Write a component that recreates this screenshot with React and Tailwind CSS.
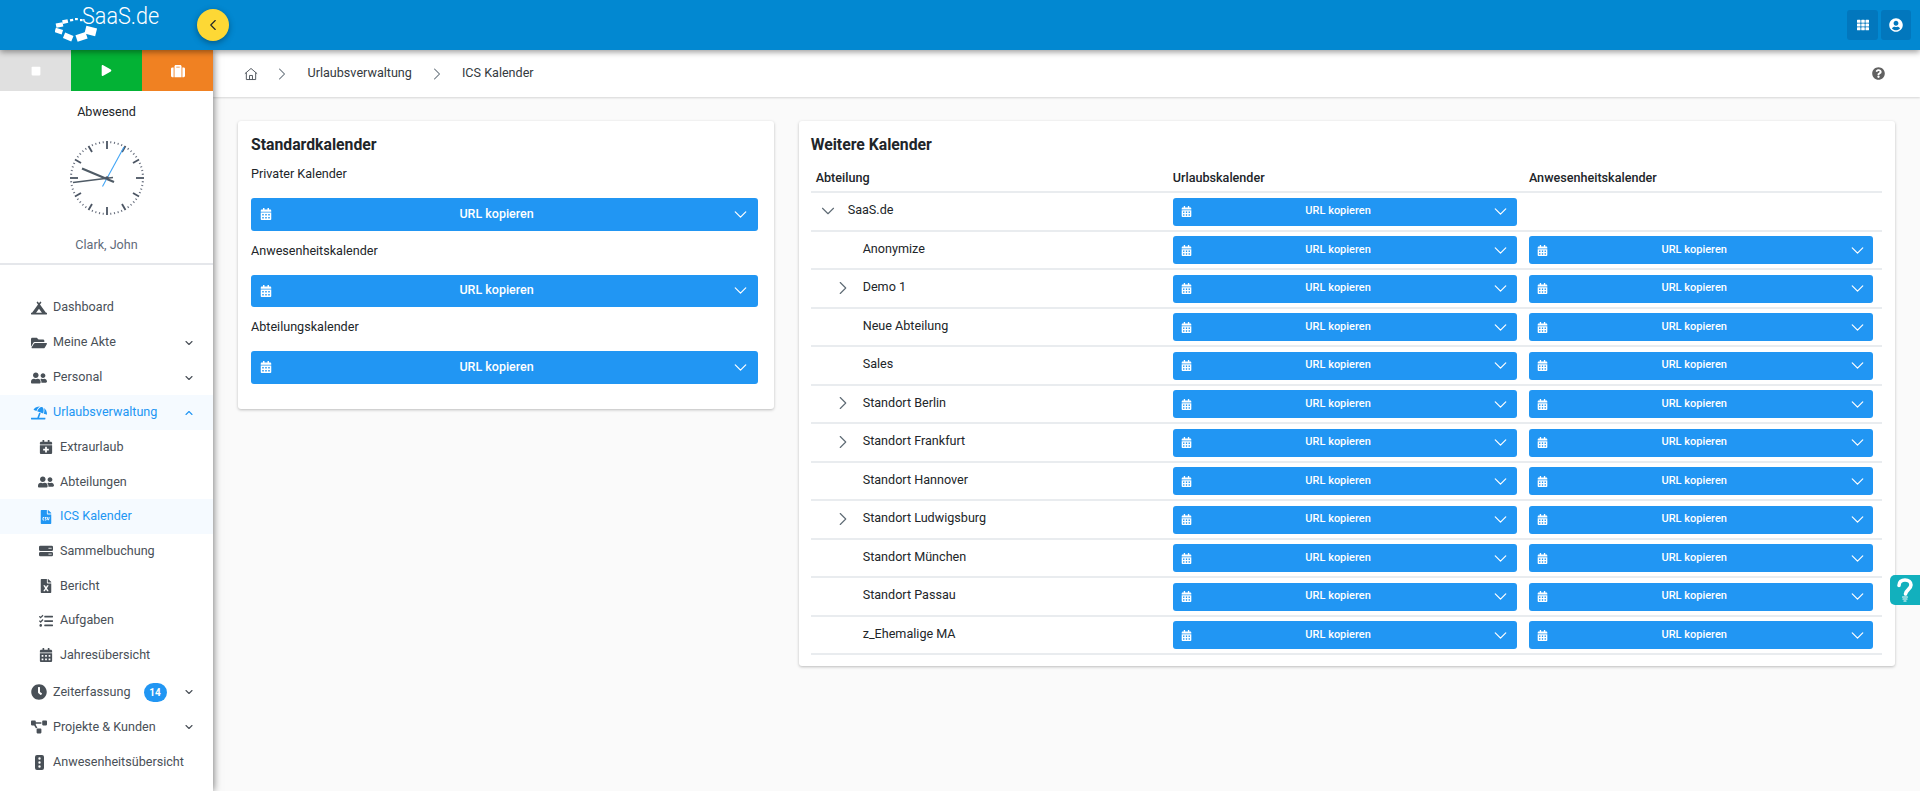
import React from "react";
import {
  FaCampground,
  FaFolderOpen,
  FaUserFriends,
  FaUmbrellaBeach,
  FaCalendarPlus,
  FaFileCsv,
  FaFileExcel,
  FaTasks,
  FaCalendarAlt,
  FaClock,
  FaProjectDiagram,
  FaStop,
  FaPlay,
  FaSuitcase,
  FaTh,
  FaUserCircle,
  FaQuestionCircle,
} from "react-icons/fa";
import { ChevronDown, ChevronRight, ChevronLeft, ChevronUp } from "lucide-react";

const departments = [
  { name: "SaaS.de", level: 0, open: true, single: true },
  { name: "Anonymize", level: 1 },
  { name: "Demo 1", level: 1, closed: true },
  { name: "Neue Abteilung", level: 1 },
  { name: "Sales", level: 1 },
  { name: "Standort Berlin", level: 1, closed: true },
  { name: "Standort Frankfurt", level: 1, closed: true },
  { name: "Standort Hannover", level: 1 },
  { name: "Standort Ludwigsburg", level: 1, closed: true },
  { name: "Standort München", level: 1 },
  { name: "Standort Passau", level: 1 },
  { name: "z_Ehemalige MA", level: 1 },
];

// two stacked drives, FaServer has three
const DriveIcon = ({ className }) => (
  <svg viewBox="0 0 16 14" fill="currentColor" className={className}>
    <path fillRule="evenodd" d="M1.500 1h13A1.500 1.500 0 0 1 16 2.500v3A1.500 1.500 0 0 1 14.500 7h-13A1.500 1.500 0 0 1 0 5.500v-3A1.500 1.500 0 0 1 1.500 1zM11 3.300v1.400h1.200V3.300zM13 3.300v1.400h1.200V3.300z" />
    <path fillRule="evenodd" d="M1.500 8h13A1.500 1.500 0 0 1 16 9.500v2a1.500 1.500 0 0 1-1.500 1.500h-13A1.500 1.500 0 0 1 0 11.500v-2A1.500 1.500 0 0 1 1.500 8zM11 9.800v1.400h1.200V9.800zM13 9.800v1.400h1.200V9.800z" />
  </svg>
);

const LightIcon = ({ className }) => (
  <svg viewBox="0 0 9 15" fill="currentColor" className={className}>
    <path fillRule="evenodd" d="M2 0h5a2 2 0 0 1 2 2v11a2 2 0 0 1-2 2H2a2 2 0 0 1-2-2V2a2 2 0 0 1 2-2zM4.500 2.300a1.200 1.200 0 1 0 0 2.400 1.200 1.200 0 0 0 0-2.400zM4.500 6.300a1.200 1.200 0 1 0 0 2.400 1.200 1.200 0 0 0 0-2.400zM4.500 10.300a1.200 1.200 0 1 0 0 2.400 1.200 1.200 0 0 0 0-2.400z" />
  </svg>
);

const menuTop = [
  { label: "Dashboard", icon: FaCampground },
  { label: "Meine Akte", icon: FaFolderOpen, chevron: true },
  { label: "Personal", icon: FaUserFriends, chevron: true },
];

const menuSub = [
  { label: "Extraurlaub", icon: FaCalendarPlus },
  { label: "Abteilungen", icon: FaUserFriends, iconClass: "w-[16px] h-[16px]" },
  { label: "ICS Kalender", icon: FaFileCsv, active: true },
  { label: "Sammelbuchung", icon: DriveIcon },
  { label: "Bericht", icon: FaFileExcel },
  { label: "Aufgaben", icon: FaTasks },
  { label: "Jahresübersicht", icon: FaCalendarAlt },
];

const Logo = () => (
  <div className="flex items-start h-full ml-[55px]">
    <svg width="48" height="42" viewBox="55 0 48 42" className="shrink-0 fill-white">
      <rect x="80" y="19" width="2.600" height="2.200" />
      <rect x="75" y="18" width="2.800" height="2.200" />
      <rect x="70" y="19" width="3.200" height="2.400" transform="rotate(-10 71 20)" />
      <rect x="62.500" y="20" width="5.500" height="3.600" transform="rotate(-12 64 22)" />
      <rect x="56" y="23" width="7" height="4.400" transform="rotate(-10 58 25)" />
      <rect x="55" y="28.500" width="7.500" height="4.600" transform="rotate(18 58 31)" />
      <rect x="64" y="33.500" width="9" height="6" transform="rotate(22 67 36)" />
      <rect x="76" y="33.500" width="10.500" height="7" transform="rotate(-18 81 36)" />
      <rect x="85.500" y="27" width="11" height="8" transform="rotate(14 91 30)" />
    </svg>
    <span className="-ml-[21px] mt-[1px] text-[24px] leading-[30px] font-light text-white origin-left scale-x-90">
      SaaS.de
    </span>
  </div>
);

const Clock = () => {
  const ticks = Array.from({ length: 60 }, (_, i) => i);
  return (
    <svg width="76" height="76" viewBox="-38 -38 76 76">
      {ticks.map((i) =>
        i % 5 === 0 ? (
          <line key={i} x1="0" y1="-37" x2="0" y2={i % 15 === 0 ? "-29" : "-30"} stroke="#4b5563" strokeWidth="1.800" transform={`rotate(${i * 6})`} />
        ) : (
          <line key={i} x1="0" y1="-37" x2="0" y2="-35" stroke="#6b7280" strokeWidth="1.100" transform={`rotate(${i * 6})`} />
        )
      )}
      <line x1="-25" y1="-9.500" x2="7" y2="4" stroke="#4f5b66" strokeWidth="2.200" />
      <line x1="-34" y1="4.500" x2="6" y2="-0.500" stroke="#4f5b66" strokeWidth="1.600" />
      <line x1="-4.500" y1="8.500" x2="17" y2="-31" stroke="#42a5f5" strokeWidth="1.100" />
      <circle cx="0" cy="0" r="1.800" fill="#4b5563" />
    </svg>
  );
};

const MenuItem = ({ item, highlight }) => {
  const Icon = item.icon;
  return (
    <div className={`flex items-center h-[35px] pl-[31px] pr-[18px] ${highlight ? "bg-[#f5faff] text-[#2196f3]" : "text-[#495057]"}`}>
      <span className="w-[16px] flex justify-center mr-[6px]">
        <Icon className={item.iconClass || "text-[16px]"} />
      </span>
      <span className="text-[12.6px]">{item.label}</span>
      {item.badge && (
        <span className="ml-[13px] w-[23px] h-[19px] rounded-full bg-[#2196f3] text-white text-[10px] font-bold flex items-center justify-center">
          {item.badge}
        </span>
      )}
      {item.chevron && <ChevronDown className="ml-auto w-[12px] h-[12px]" strokeWidth={2.25} />}
      {item.up && <ChevronUp className="ml-auto w-[12px] h-[12px]" strokeWidth={2.25} />}
    </div>
  );
};

const SubItem = ({ item }) => {
  const Icon = item.icon;
  return (
    <div className={`flex items-center h-[34.7px] pl-[38px] ${item.active ? "bg-[#f5faff] text-[#2196f3]" : "text-[#495057]"}`}>
      <span className="w-[15px] flex justify-center mr-[7px]">
        <Icon className={`shrink-0 ${item.iconClass || "w-[14px] h-[14px]"}`} />
      </span>
      <span className="text-[12.6px]">{item.label}</span>
    </div>
  );
};

const Sidebar = () => (
  <aside className="relative z-10 w-[213px] shrink-0 bg-white shadow-[0_0_8px_rgba(0,0,0,0.6)] overflow-hidden flex flex-col">
    <div className="flex h-[41px] shrink-0 text-white">
      <div className="flex-1 bg-[#e0e0e0] flex items-center justify-center"><FaStop className="text-[10px]" /></div>
      <div className="flex-1 bg-[#03b235] flex items-center justify-center"><FaPlay className="text-[11px]" /></div>
      <div className="flex-1 bg-[#f08122] flex items-center justify-center"><FaSuitcase className="text-[14px]" /></div>
    </div>
    <div className="text-center text-[12.6px] text-[#212529] mt-[12px] leading-[17px]">Abwesend</div>
    <div className="flex justify-center mt-[20px]">
      <Clock />
    </div>
    <div className="text-center text-[12.6px] text-[#5f6b7a] mt-[20px] leading-[17px]">Clark, John</div>
    <div className="border-b-2 border-[#e5e7eb] mt-[10px]" />
    <nav className="pt-[25px]">
      {menuTop.map((m) => (
        <MenuItem key={m.label} item={m} />
      ))}
      <MenuItem item={{ label: "Urlaubsverwaltung", icon: FaUmbrellaBeach, up: true }} highlight />
      {menuSub.map((m) => (
        <SubItem key={m.label} item={m} />
      ))}
      <div className="h-[2px]" />
      <MenuItem item={{ label: "Zeiterfassung", icon: FaClock, chevron: true, badge: "14" }} />
      <MenuItem item={{ label: "Projekte & Kunden", icon: FaProjectDiagram, chevron: true }} />
      <MenuItem item={{ label: "Anwesenheitsübersicht", icon: LightIcon, iconClass: "w-[9px] h-[15px]" }} />
    </nav>
  </aside>
);

const UrlButton = ({ small }) => (
  <button className={`w-full flex items-center bg-[#2196f3] rounded-[3px] text-white ${small ? "h-[28px] pl-[8px] pr-[5.5px]" : "h-[32.5px] pl-[9px] pr-[6.5px]"}`}>
    <FaCalendarAlt className={small ? "text-[11px]" : "text-[12px]"} />
    <span className={`flex-1 text-center font-medium ${small ? "text-[11px] pr-[6px]" : "text-[12.5px] pr-[9px]"}`}>URL kopieren</span>
    <ChevronDown className="w-[21px] h-[21px]" strokeWidth={1.4} />
  </button>
);

const Card = ({ title, className, children }) => (
  <section className={`bg-white rounded-[3px] shadow-[0_1px_3px_rgba(0,0,0,0.25)] ${className}`}>
    <h2 className="text-[15.75px] leading-[20px] font-bold text-[#212529]">{title}</h2>
    {children}
  </section>
);

const Row = ({ dept }) => (
  <div className="grid grid-cols-3 h-[38.5px] pr-[3px] border-b-2 border-[#e9ecef] items-center">
    <div className={`flex items-center text-[12.6px] text-[#212529] -mt-[2px] ${dept.level === 0 ? "pl-[6.500px]" : "pl-[21.500px]"}`}>
      <span className="w-[30.500px] flex shrink-0 text-[#5f6b75]">
        {dept.open && <ChevronDown className="w-[22px] h-[22px]" strokeWidth={1.25} />}
        {dept.closed && <ChevronRight className="w-[22px] h-[22px]" strokeWidth={1.25} />}
      </span>
      {dept.name}
    </div>
    <div className="px-[6px]"><UrlButton small /></div>
    <div className="px-[6px]">{!dept.single && <UrlButton small />}</div>
  </div>
);

export default function App() {
  return (
    <div className="h-screen w-full overflow-hidden flex flex-col bg-[#fafafa] font-['Roboto',sans-serif]">
      <header className="relative z-20 h-[50px] shrink-0 bg-[#0288d1] shadow-[0_2px_6px_rgba(0,0,0,0.4)] flex items-stretch">
        <Logo />
        <button className="absolute left-[197px] top-[9px] w-[32px] h-[32px] rounded-full bg-[#fdd835] text-[#212529] flex items-center justify-center shadow-[0_2px_6px_rgba(0,0,0,0.35)]">
          <ChevronLeft className="w-[18px] h-[18px]" strokeWidth={1.5} />
        </button>
        <div className="ml-auto flex items-center gap-[3px] pr-[9px]">
          <div className="w-[31px] h-[30px] rounded-[3px] bg-[#0277bd] flex items-center justify-center text-white"><FaTh className="text-[12px]" /></div>
          <div className="w-[30px] h-[30px] rounded-[3px] bg-[#0277bd] flex items-center justify-center text-white"><FaUserCircle className="text-[14px]" /></div>
        </div>
      </header>
      <div className="flex flex-1 min-h-0">
        <Sidebar />
        <main className="relative flex-1 min-w-0">
          <div className="h-[47px] bg-white shadow-[0_1px_2px_rgba(0,0,0,0.15)] flex items-center pl-[31px] pr-[35px] text-[12.6px] text-[#343a40]">
            <svg width="14" height="14" viewBox="0 0 24 24" fill="none" stroke="#495057" strokeWidth="1.600" strokeLinejoin="round">
              <path d="M1.500 11.500 12 2.500l10.500 9" />
              <path d="M4 9.500V21.500h16V9.500" />
              <path d="M9.500 21.500v-7h5v7" />
            </svg>
            <ChevronRight className="ml-[14px] w-[20px] h-[20px] text-[#5f6b75]" strokeWidth={1.25} />
            <span className="ml-[15.500px]">Urlaubsverwaltung</span>
            <ChevronRight className="ml-[15.500px] w-[20px] h-[20px] text-[#5f6b75]" strokeWidth={1.25} />
            <span className="ml-[14.500px]">ICS Kalender</span>
            <FaQuestionCircle className="ml-auto text-[13px] text-[#616161]" />
          </div>
          <div className="grid grid-cols-12 gap-[25px] px-[25px] pt-[24px] items-start">
            <Card title="Standardkalender" className="col-span-4 pl-[13px] pr-[16px] pt-[14px] pb-[25px]">
              <p className="text-[12.6px] leading-[16px] text-[#212529] mt-[11px] mb-[16px]">Privater Kalender</p>
              <UrlButton />
              <p className="text-[12.6px] leading-[16px] text-[#212529] mt-[12px] mb-[16px]">Anwesenheitskalender</p>
              <UrlButton />
              <p className="text-[12.6px] leading-[16px] text-[#212529] mt-[12px] mb-[16px]">Abteilungskalender</p>
              <UrlButton />
            </Card>
            <Card title="Weitere Kalender" className="col-span-8 pl-[12px] pr-[13px] pt-[14px] pb-[11px]">
              <div className="grid grid-cols-3 h-[38.400px] pt-[15.400px] pr-[3px] border-b-2 border-[#e9ecef] text-[12.6px] font-medium text-[#212529] leading-[16px]">
                <div className="px-[5px]">Abteilung</div>
                <div className="px-[6px]">Urlaubskalender</div>
                <div className="px-[6px]">Anwesenheitskalender</div>
              </div>
              {departments.map((d) => (
                <Row key={d.name} dept={d} />
              ))}
            </Card>
          </div>
          <div className="absolute right-0 top-[525px] w-[30px] h-[30px] rounded-l-[5px] bg-[#12b0bd] flex items-center justify-center">
            <svg width="20" height="26" viewBox="0 0 20 26" fill="none" stroke="white" strokeLinecap="round">
              <path d="M4 8.500C4 5 6.500 3 10 3s6 2 6 5c0 4-5 4.500-5.500 9" strokeWidth="3.600" />
              <path d="M7.500 20h5M8 22h4M9 24h2" strokeWidth="1.200" />
            </svg>
          </div>
        </main>
      </div>
    </div>
  );
}
